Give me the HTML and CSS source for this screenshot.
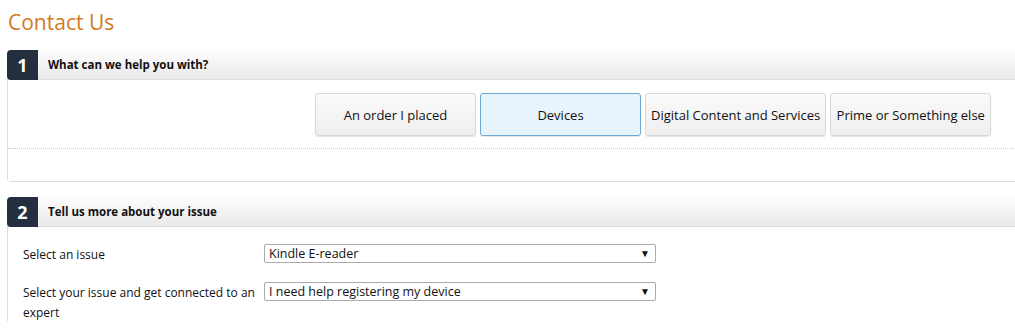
FILE: index.html
```html
<!DOCTYPE html>
<html lang="en">
<head>
    <meta charset="UTF-8">
    <title>Contact Us</title>
    <link rel="stylesheet" href="styles.css">
</head>
<body>
    <h1 class="page-title">Contact Us</h1>

    <div class="step">
        <div class="step-head">
            <span class="step-num">1</span>
            <span class="step-title">What can we help you with?</span>
        </div>
        <div class="step-body">
            <div class="choices">
                <button class="choice">An order I placed</button>
                <button class="choice selected">Devices</button>
                <button class="choice">Digital Content and Services</button>
                <button class="choice">Prime or Something else</button>
            </div>
            <div class="dotted"></div>
            <div class="spacer"></div>
        </div>
    </div>

    <div class="step step-open">
        <div class="step-head">
            <span class="step-num">2</span>
            <span class="step-title">Tell us more about your issue</span>
        </div>
        <div class="step-body">
            <div class="field">
                <label class="field-label">Select an issue</label>
                <div class="select">Kindle E-reader<span class="arrow">&#9660;</span></div>
            </div>
            <div class="field">
                <label class="field-label">Select your issue and get connected to an expert</label>
                <div class="select">I need help registering my device<span class="arrow">&#9660;</span></div>
            </div>
        </div>
    </div>
</body>
</html>
```

FILE: styles.css
```css
* {
    margin: 0;
    padding: 0;
    box-sizing: border-box;
}

body {
    background-color: #fff;
    font-family: 'Open Sans', sans-serif;
    font-size: 12px;
    color: #111;
    padding: 8px 0 0 7px;
    overflow: hidden;
}

.page-title {
    font-weight: normal;
    font-size: 21px;
    color: #d27a20;
    line-height: 28px;
    margin: 0 0 14px 1px;
}

.step {
    width: 1030px;
    border: 1px solid #ddd;
    border-radius: 4px;
    margin-bottom: 15px;
}

.step-head {
    display: flex;
    align-items: center;
    height: 30px;
    background: linear-gradient(#fdfdfd, #e9e9e9);
    border-bottom: 1px solid #ddd;
    margin: -1px 0 0 -1px;
}

.step-num {
    width: 31px;
    height: 30px;
    background-color: #232f3e;
    color: #fff;
    font-weight: bold;
    font-size: 18px;
    line-height: 30px;
    text-align: center;
    border-radius: 4px 0 0 4px;
}

.step-title {
    font-weight: bold;
    font-size: 11.5px;
    margin-left: 10px;
    color: #111;
}

.step-body {
    background-color: #fff;
}

.choices {
    display: flex;
    gap: 4px;
    padding: 13px 0 12px 307px;
}

.choice {
    height: 43px;
    min-width: 161px;
    padding: 0 5px;
    font-family: inherit;
    font-size: 13px;
    color: #111;
    background: linear-gradient(#fafafa, #efefef);
    border: 1px solid #d8d8d8;
    border-radius: 3px;
    box-shadow: 0 1px 1px rgba(0, 0, 0, 0.1);
}

.choice.selected {
    background: #e8f4fd;
    border-color: #6fa8d3;
}

.dotted {
    border-top: 1px dotted #ccc;
}

.spacer {
    height: 32px;
}

.step-open {
    border-bottom: none;
}

.step-open .step-body {
    padding: 17px 0 0 15px;
}

.field {
    display: flex;
    align-items: flex-start;
    margin-bottom: 17px;
}

.field-label {
    width: 241px;
    font-size: 12px;
    line-height: 20px;
    color: #111;
    padding-top: 1px;
}

.select {
    position: relative;
    width: 392px;
    height: 19px;
    border: 1px solid #aaa;
    border-radius: 2px;
    font-size: 12.5px;
    line-height: 17px;
    padding-left: 4px;
    color: #111;
}

.arrow {
    position: absolute;
    right: 5px;
    top: 0;
    font-size: 10px;
}
```
